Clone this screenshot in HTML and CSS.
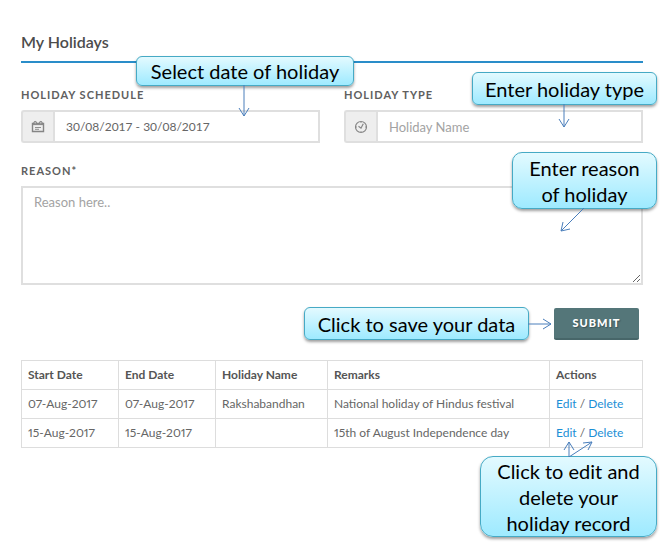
FILE: index.html
```html
<!DOCTYPE html>
<html lang="en">
<head>
<meta charset="utf-8">
<title>My Holidays</title>
<link rel="stylesheet" href="styles.css">
</head>
<body>
<main class="page">
  <h1 class="title">My Holidays</h1>
  <form class="form">
    <div class="fields">
      <div class="field">
        <label class="label" for="schedule">Holiday Schedule</label>
        <div class="group">
          <span class="addon">
            <svg width="14" height="14" viewBox="0 0 14 14" fill="none" stroke="#858585" aria-hidden="true">
              <path d="M1.5 3.5h11v8h-11z" stroke-width="1.4"/>
              <path d="M1.5 4.6h11" stroke-width="1"/>
              <circle cx="4.2" cy="2.8" r="1.4" fill="#bbb"/>
              <circle cx="9.8" cy="2.8" r="1.4" fill="#bbb"/>
              <path d="M4 7.5h6M4 9.3h4" stroke-width=".9"/>
            </svg>
          </span>
          <input class="input input-date" id="schedule" type="text" value="30/08/2017 - 30/08/2017">
        </div>
        <div class="callout callout-date">Select date of holiday
          <svg class="arrow" width="12" height="32" viewBox="0 0 12 32"><path d="M6 0v31M1 23l5 8 5-8"/></svg>
        </div>
      </div>
      <div class="field">
        <label class="label" for="type">Holiday Type</label>
        <div class="group">
          <span class="addon">
            <svg width="14" height="14" viewBox="0 0 14 14" fill="none" stroke="#858585" aria-hidden="true">
              <circle cx="7" cy="7" r="5.5" stroke-width="1.2"/>
              <path d="M4.5 6.2L7 8.2l2.3-4.4" stroke-width="1.2"/>
              <path d="M7 2v1M12 7h-1M2 7h1M7 12v-1" stroke-width=".8"/>
            </svg>
          </span>
          <input class="input" id="type" type="text" placeholder="Holiday Name">
        </div>
        <div class="callout callout-type">Enter holiday type
          <svg class="arrow" width="12" height="24" viewBox="0 0 12 24"><path d="M6 0v23M1 15l5 8 5-8"/></svg>
        </div>
      </div>
    </div>
    <div class="field">
      <label class="label" for="reason">Reason*</label>
      <textarea class="textarea" id="reason" placeholder="Reason here.."></textarea>
      <div class="callout callout-reason">Enter reason<br>of holiday
        <svg class="arrow" width="26" height="25" viewBox="0 0 26 25"><path d="M25 0L2 23M4 14L2 23l9-2"/></svg>
      </div>
    </div>
    <div class="actions">
      <div class="callout callout-save">Click to save your data
        <svg class="arrow" width="25" height="12" viewBox="0 0 25 12"><path d="M0 6h23M15 1l8 5-8 5"/></svg>
      </div>
      <button class="submit" type="button">Submit</button>
    </div>
  </form>
  <div class="records">
    <table class="table">
      <colgroup><col class="col-date"><col class="col-date"><col class="col-name"><col><col class="col-actions"></colgroup>
      <thead>
        <tr><th>Start Date</th><th>End Date</th><th>Holiday Name</th><th>Remarks</th><th>Actions</th></tr>
      </thead>
      <tbody>
        <tr><td>07-Aug-2017</td><td>07-Aug-2017</td><td>Rakshabandhan</td><td>National holiday of Hindus festival</td><td><a href="#edit">Edit</a> / <a href="#delete">Delete</a></td></tr>
        <tr><td>15-Aug-2017</td><td>15-Aug-2017</td><td></td><td>15th of August Independence day</td><td><a href="#edit">Edit</a> / <a href="#delete">Delete</a></td></tr>
      </tbody>
    </table>
    <div class="callout callout-edit"><span>Click to edit and<br>delete your<br>holiday record</span>
      <svg class="arrow" width="32" height="17" viewBox="0 0 32 17"><path d="M6 17V2M1 10l5-8 5 8M6 17L29 2M20 3l9-1-4 8"/></svg>
    </div>
  </div>
</main>
</body>
</html>
```
FILE: styles.css
```css
* {
  box-sizing: border-box;
}

body {
  margin: 0;
  background: #fff;
  color: #666;
  font: 13px/20px Lato, "Liberation Sans", sans-serif;
}

.page {
  min-height: 100vh;
  padding: 32px 22px 96px 21px;
}

.title {
  margin: 0 0 23px;
  padding-bottom: 9px;
  border-bottom: 2px solid #2a8dc9;
  color: #4c4c4c;
  font-size: 16px;
  line-height: 20px;
  font-weight: 600;
}

.fields {
  display: grid;
  grid-template-columns: 1fr 1fr;
  gap: 24px;
  margin-bottom: 19px;
}

.field {
  position: relative;
}

.label {
  display: block;
  margin-bottom: 6px;
  color: #606060;
  font-size: 11px;
  line-height: 18px;
  font-weight: 700;
  letter-spacing: 1px;
  text-transform: uppercase;
}

.group {
  display: flex;
  height: 33px;
}

.addon {
  display: flex;
  align-items: center;
  justify-content: center;
  width: 32px;
  border: 2px solid #dfdfdf;
  border-right: 0;
  border-radius: 3px 0 0 3px;
  background: #eee;
}

.input,
.textarea {
  border: 2px solid #dfdfdf;
  border-radius: 0;
  background: #fff;
  color: #666;
  font: inherit;
  outline: 0;
}

.input {
  flex: 1;
  min-width: 0;
  padding: 0 11px;
}

.input-date {
  font-size: 12px;
}

.textarea {
  display: block;
  width: 100%;
  height: 99px;
  padding: 4px 11px;
}

.input::placeholder,
.textarea::placeholder {
  color: #a3a3a3;
}

.actions {
  position: relative;
  display: flex;
  justify-content: flex-end;
  padding: 23px 4px 20px 0;
}

.submit {
  width: 85px;
  height: 32px;
  border: 0;
  border-bottom: 2px solid #476669;
  border-radius: 2px;
  background: #547679;
  color: #fff;
  font: 900 11px/16px Lato, "Liberation Sans", sans-serif;
  letter-spacing: 1px;
  text-transform: uppercase;
  text-shadow: 1px 1px 1px #3b5558;
}

.records {
  position: relative;
}

.table {
  width: 100%;
  table-layout: fixed;
  border-collapse: collapse;
  font-size: 12px;
  font-variant-numeric: proportional-nums;
}

.table th,
.table td {
  height: 29px;
  padding: 4px 6px;
  border: 1px solid #ddd;
  text-align: left;
  white-space: nowrap;
}

.table th {
  color: #555;
}

.table a {
  color: #1b8fd6;
  text-decoration: none;
}

.col-date {
  width: 97px;
}

.col-name {
  width: 112px;
}

.col-actions {
  width: 93px;
}

.callout {
  position: absolute;
  z-index: 1;
  display: flex;
  align-items: center;
  justify-content: center;
  border: 1px solid #46aac5;
  border-radius: 6px;
  background: linear-gradient(#e3faff, #9eeaff);
  box-shadow: 0 2px 3px rgba(0, 0, 0, .38);
  color: #000;
  font-size: 20px;
  line-height: 26px;
  text-align: center;
  white-space: nowrap;
}

.arrow {
  position: absolute;
  fill: none;
  stroke: #4a7ebb;
}

.callout-date {
  top: -30px;
  left: 115px;
  width: 218px;
  height: 30px;
}

.callout-date .arrow {
  top: 100%;
  left: 101px;
}

.callout-type {
  top: -14px;
  right: -14px;
  width: 185px;
  height: 33px;
}

.callout-type .arrow {
  top: 100%;
  left: 85px;
}

.callout-reason {
  top: -10px;
  right: -14px;
  width: 145px;
  height: 57px;
  border-radius: 10px;
}

.callout-reason .arrow {
  top: 100%;
  left: 46px;
}

.callout-save {
  top: 22px;
  right: 114px;
  width: 225px;
  height: 33px;
}

.callout-save .arrow {
  top: 10px;
  left: 100%;
}

.callout-edit {
  top: 96px;
  right: -14px;
  width: 177px;
  height: 81px;
  border-radius: 13px;
}

.callout-edit .arrow {
  bottom: 100%;
  left: 82px;
}
```
